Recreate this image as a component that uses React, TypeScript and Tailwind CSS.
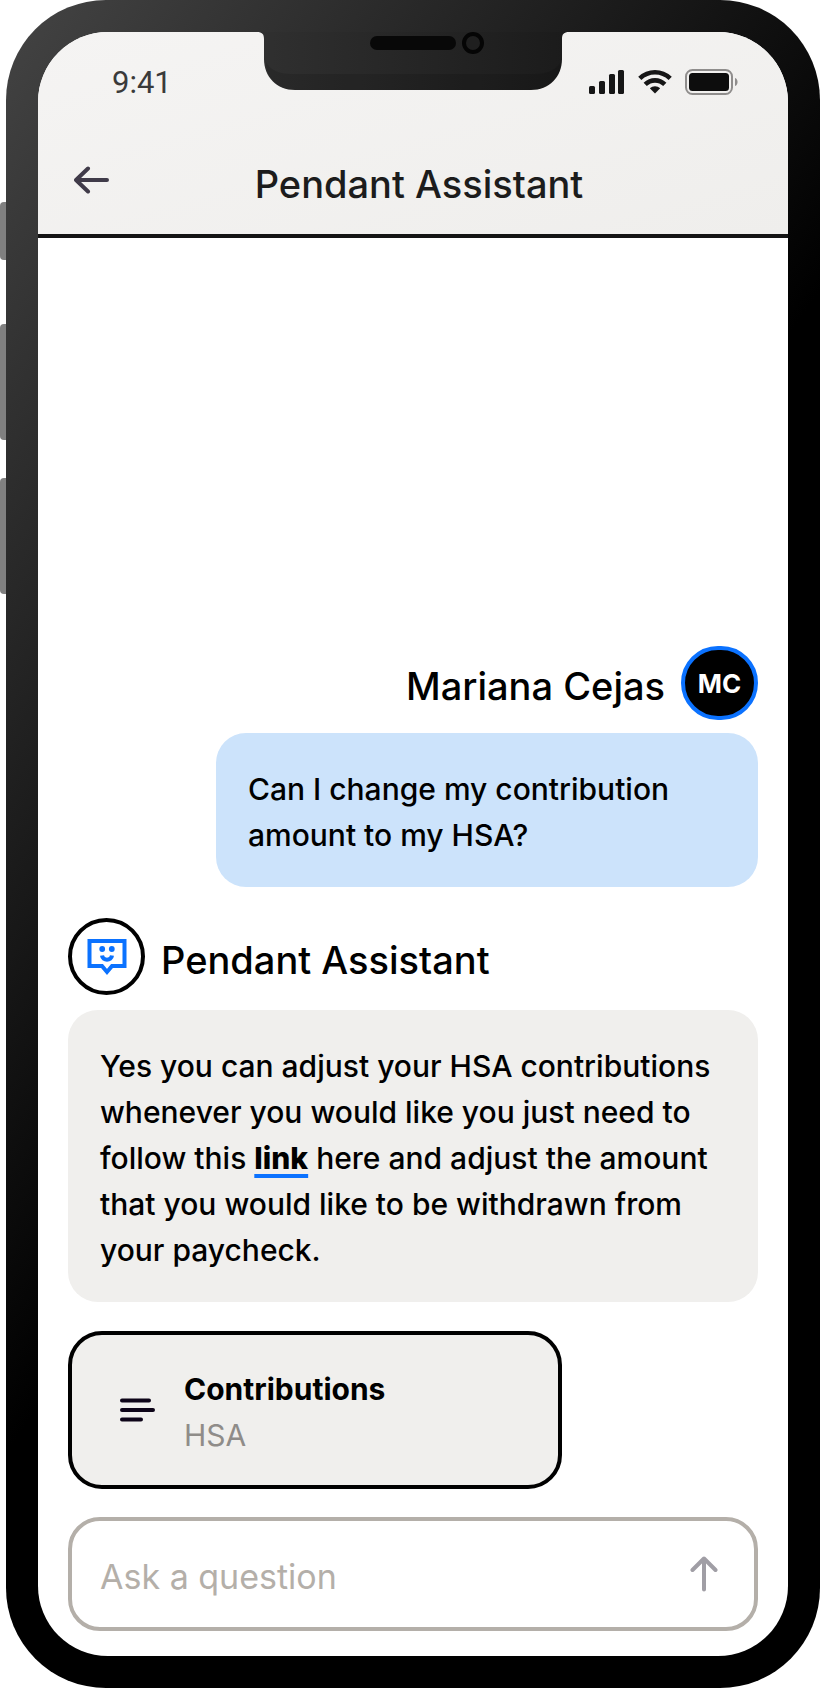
import React, { useState } from "react";

const SignalIcon = () => (
  <svg width="36" height="26" viewBox="0 0 36 26" fill="#161616" aria-hidden="true">
    <rect x="0" y="17" width="6" height="8" rx="1.5" />
    <rect x="10" y="12" width="6" height="13" rx="1.5" />
    <rect x="20" y="5" width="6" height="20" rx="1.5" />
    <rect x="29" y="1" width="6" height="24" rx="1.5" />
  </svg>
);

const WifiIcon = () => (
  <svg width="34" height="26" viewBox="0 0 34 26" fill="none" stroke="#161616" aria-hidden="true">
    <path d="M1.8 9.4C10.4 1.2 23.6 1.2 32.2 9.4" strokeWidth="4.6" />
    <path d="M7.2 15.4C12.8 10 21.2 10 26.8 15.4" strokeWidth="4.6" />
    <path d="M11.8 19.3C14.8 16.6 19.2 16.6 22.2 19.3L17 24.6Z" fill="#161616" stroke="none" />
  </svg>
);

const BatteryIcon = () => (
  <svg width="54" height="26" viewBox="0 0 54 26" aria-hidden="true">
    <rect x="1" y="1" width="46" height="24" rx="6.5" fill="none" stroke="#8f8d8c" strokeWidth="2" />
    <rect x="4" y="4" width="40" height="18" rx="3.5" fill="#0d0d0d" />
    <path d="M50 9c3.4 1 3.4 7 0 8z" fill="#8f8d8c" />
  </svg>
);

const BackIcon = () => (
  <svg width="36" height="28" viewBox="0 0 36 28" fill="none" stroke="#403b49" strokeWidth="4" strokeLinecap="round" strokeLinejoin="round" aria-hidden="true">
    <path d="M33 14H2M14 2.5L2 14L14 25.5" />
  </svg>
);

const SendIcon = () => (
  <svg width="28" height="36" viewBox="0 0 28 36" fill="none" stroke="#a09ea5" strokeWidth="4" strokeLinecap="round" strokeLinejoin="round" aria-hidden="true">
    <path d="M14 33.5V2.5M2.5 14L14 2.5L25.5 14" />
  </svg>
);

const ListIcon = () => (
  <svg width="36" height="24" viewBox="0 0 36 24" stroke="#0d0418" strokeWidth="4" strokeLinecap="round" aria-hidden="true">
    <path d="M2 2.5H29M2 12H33M2 21.5H21" />
  </svg>
);

const BotIcon = () => (
  <svg width="40" height="38" viewBox="0 0 40 38" fill="none" stroke="#0b72ff" strokeWidth="4" aria-hidden="true">
    <path d="M2.5 3H37.5V28H25L20 34L15 28H2.5Z" />
    <path d="M15 17.5C15.5 23 24.5 23 25 17.5" />
    <circle cx="15.2" cy="11" r="2.9" fill="#0b72ff" stroke="none" />
    <circle cx="24.8" cy="11" r="2.9" fill="#0b72ff" stroke="none" />
  </svg>
);

const Notch = () => (
  <svg className="absolute left-1/2 top-0 -translate-x-1/2" width="312" height="60" viewBox="0 0 312 60" aria-hidden="true">
    <defs>
      <linearGradient id="notch" x1="0" y1="0" x2="1" y2="0">
        <stop offset="0" stopColor="#303030" />
        <stop offset="1" stopColor="#1b1b1b" />
      </linearGradient>
    </defs>
    <path d="M0 0C5 0 7 2 7 7V27C7 45 20 58 38 58H274C292 58 305 45 305 27V7C305 2 307 0 312 0Z" fill="url(#notch)" />
    <path d="M9 30C13 38 22 42 34 42H278C290 42 299 38 304 30C304 46 292 58 274 58H38C21 58 9 46 9 30Z" fill="#000" opacity="0.12" />
    <rect x="113" y="4" width="86" height="14" rx="7" fill="#080808" />
    <circle cx="216" cy="11" r="9" fill="#1f1f1f" stroke="#050505" strokeWidth="4" />
  </svg>
);

const App: React.FC = () => {
  const [question, setQuestion] = useState("");

  return (
    <div className="flex min-h-screen bg-white font-['Inter','Liberation_Sans',sans-serif] font-medium text-black">
      {/* Side buttons */}
      <div className="flex w-[6px] shrink-0 flex-col pt-[202px]">
        <div className="h-[58px] rounded-l bg-[#808080]" />
        <div className="mt-16 h-[116px] rounded-l bg-[#808080]" />
        <div className="mt-[38px] h-[116px] rounded-l bg-[#808080]" />
      </div>

      {/* Phone body */}
      <div className="flex min-w-0 flex-1 rounded-[100px] bg-[linear-gradient(125deg,#444_0%,#000_51%)] p-8">
        <div className="relative flex min-w-0 flex-1 flex-col overflow-hidden rounded-[70px] bg-white">
          <Notch />

          <header className="border-b-4 border-[#141414] bg-linear-to-br from-[#f5f4f3] to-[#efeeec] px-9 pt-7">
            <div className="flex h-11 items-center justify-between pl-[38px] pr-[13px]">
              <span className="font-['Roboto',sans-serif] text-[31px] font-normal leading-none text-[#3a3a3a]">9:41</span>
              <div className="flex items-center gap-[13px]">
                <SignalIcon />
                <WifiIcon />
                <BatteryIcon />
              </div>
            </div>
            <div className="grid h-[130px] grid-cols-[36px_1fr_24px] items-center pt-[30px]">
              <button type="button" aria-label="Back" className="pb-2">
                <BackIcon />
              </button>
              <h1 className="text-center text-[38px] leading-none text-[#1c1c1c]">Pendant Assistant</h1>
            </div>
          </header>

          {/* Conversation */}
          <main className="flex flex-1 flex-col justify-end px-[30px] pb-[25px]">
            <div className="flex items-center justify-end gap-4">
              <h2 className="pt-1.5 text-[38px] leading-none">Mariana Cejas</h2>
              <div className="flex h-[74px] w-[77px] items-center justify-center rounded-full border-4 border-[#0b72ff] bg-black text-[26px] font-bold text-white">
                MC
              </div>
            </div>
            <p className="mt-[13px] w-[542px] max-w-full self-end rounded-[30px] bg-[#cce3fb] px-8 pt-[33px] pb-[29px] text-[30px] leading-[46px]">
              Can I change my contribution amount to my HSA?
            </p>

            <div className="mt-[31px] flex items-center gap-4">
              <div className="flex size-[77px] items-center justify-center rounded-full border-4 border-black">
                <BotIcon />
              </div>
              <h2 className="pt-1.5 text-[38px] leading-none">Pendant Assistant</h2>
            </div>
            <p className="mt-[15px] rounded-[30px] bg-[#f0efed] px-8 pt-[33px] pb-[29px] text-[30px] leading-[46px]">
              Yes you can adjust your HSA contributions whenever you would like you just need to follow this{" "}
              <a href="#contributions" className="font-extrabold underline decoration-[#0b72ff] decoration-4 underline-offset-[5px]">
                link
              </a>{" "}
              here and adjust the amount that you would like to be withdrawn from your paycheck.
            </p>

            <button
              type="button"
              className="mt-[29px] flex w-[494px] max-w-full items-center gap-7 rounded-[34px] border-4 border-black bg-[#f0efed] px-12 py-[27px] text-left text-[30px] leading-[46px]"
            >
              <ListIcon />
              <span className="flex flex-col pt-1">
                <span className="font-bold">Contributions</span>
                <span className="font-normal text-[#8f8c89]">HSA</span>
              </span>
            </button>

            <form className="mt-7 flex h-[114px] items-center rounded-[32px] border-4 border-[#b4afa9] pl-7 pr-9" onSubmit={(e) => e.preventDefault()}>
              <input
                type="text"
                aria-label="Ask a question"
                placeholder="Ask a question"
                value={question}
                onChange={(e) => setQuestion(e.target.value)}
                className="min-w-0 flex-1 pt-1 text-[34px] font-normal outline-none placeholder:text-[#b4afa9]"
              />
              <button type="submit" aria-label="Send">
                <SendIcon />
              </button>
            </form>
          </main>
        </div>
      </div>
    </div>
  );
};

export default App;
